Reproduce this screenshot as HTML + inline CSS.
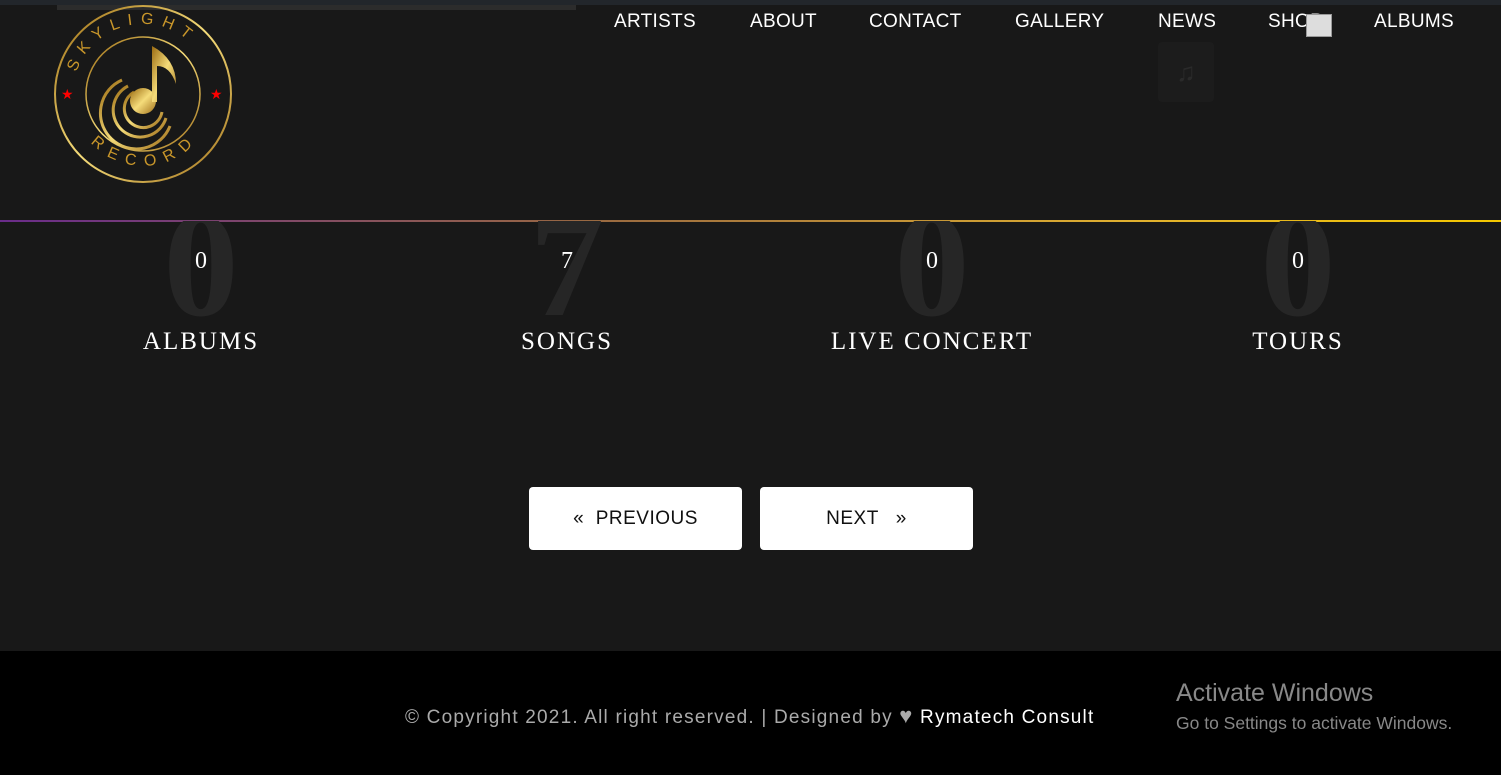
<!DOCTYPE html>
<html><head><meta charset="utf-8"><style>
*{margin:0;padding:0;box-sizing:border-box}
body{width:1501px;height:775px;background:#181818;position:relative;overflow:hidden;font-family:"Liberation Sans",sans-serif}
.topbar{position:absolute;left:0;top:0;width:1501px;height:5px;background:#22262b}
.strip{position:absolute;left:57px;top:5px;width:519px;height:5px;background:#2c2c2c}
nav a{position:absolute;top:11px;color:#fff;font-size:19px;text-decoration:none;letter-spacing:.3px}
.line{position:absolute;left:0;top:220px;width:1501px;height:2px;background:linear-gradient(90deg,#6a2c8a,#9a6a40 40%,#e0b030 75%,#f5c800)}
.stat{position:absolute;top:200px;width:360px;margin-left:-180px;text-align:center;color:#fff;font-family:"Liberation Serif",serif}
.big{position:absolute;left:0;right:0;top:-10px;font-size:150px;font-weight:bold;color:#262626;line-height:150px;clip-path:inset(31px 0 0 0)}
.num{position:absolute;left:0;right:0;top:48px;font-size:24px}
.lbl{position:absolute;left:0;right:0;top:128px;font-size:25px;letter-spacing:2px}
.btn{position:absolute;top:487px;height:63px;width:213px;background:#fff;border-radius:4px;color:#111;font-size:19px;line-height:63px;text-align:center;letter-spacing:.5px}
footer{position:absolute;left:0;top:651px;width:1501px;height:124px;background:#000}
.copy{position:absolute;left:405px;top:52px;color:#aaa;font-size:19px;letter-spacing:1.2px;white-space:nowrap}
.copy b{color:#fff;font-weight:normal}
.win1{position:absolute;left:1176px;top:28px;color:#888;font-size:25px}
.win2{position:absolute;left:1176px;top:62px;color:#888;font-size:17.5px}
</style></head><body>
<div class="topbar"></div><div class="strip"></div>
<div style="position:absolute;left:1158px;top:42px;width:56px;height:60px;background:#1c1c1c;border-radius:4px;color:#2a2a2a;font-size:26px;text-align:center;line-height:60px">♫</div>
<svg style="position:absolute;left:52px;top:4px" width="182" height="182" viewBox="0 0 182 182">
<defs><linearGradient id="g" x1="0" y1="0" x2="1" y2="1"><stop offset="0" stop-color="#9a6a10"/><stop offset=".5" stop-color="#f5dc7a"/><stop offset="1" stop-color="#a0701a"/></linearGradient></defs>
<circle cx="91" cy="90" r="88" fill="none" stroke="url(#g)" stroke-width="2"/>
<circle cx="91" cy="90" r="57" fill="none" stroke="url(#g)" stroke-width="1.5"/>
<text x="9" y="95" fill="#f00" font-size="14">★</text><text x="158" y="95" fill="#f00" font-size="14">★</text>
<path id="tp" d="M21,90 A70,70 0 0,1 161,90" fill="none"/>
<text font-size="16" fill="#c8962a" letter-spacing="8" font-family="Liberation Sans"><textPath href="#tp" startOffset="10%">SKYLIGHT</textPath></text>
<path id="bp" d="M24,112 A70,70 0 0,0 158,112" fill="none"/>
<text font-size="16" fill="#c8962a" letter-spacing="9" font-family="Liberation Sans"><textPath href="#bp" startOffset="17%">RECORD</textPath></text>
<path d="M70,76 A36,36 0 1,0 118,122" fill="none" stroke="url(#g)" stroke-width="3"/>
<path d="M76,82 A27,27 0 1,0 114,114" fill="none" stroke="url(#g)" stroke-width="3"/>
<path d="M82,88 A19,19 0 1,0 110,108" fill="none" stroke="url(#g)" stroke-width="3"/>
<circle cx="91" cy="97" r="13" fill="url(#g)"/>
<path d="M100,98 L100,42 Q124,55 124,80 Q118,62 105,62 L105,98Z" fill="url(#g)"/>
</svg>
<nav><a style="left:614px">ARTISTS</a><a style="left:750px">ABOUT</a><a style="left:869px">CONTACT</a><a style="left:1015px">GALLERY</a><a style="left:1158px">NEWS</a><a style="left:1268px">SHOP</a><a style="left:1374px">ALBUMS</a></nav>
<div style="position:absolute;left:1306px;top:14px;width:26px;height:23px;background:#ddd;border:1px solid #999"></div>
<div class="line"></div>
<div class="stat" style="left:201px"><div class="big">0</div><div class="num">0</div><div class="lbl">ALBUMS</div></div>
<div class="stat" style="left:567px"><div class="big">7</div><div class="num">7</div><div class="lbl">SONGS</div></div>
<div class="stat" style="left:932px"><div class="big">0</div><div class="num">0</div><div class="lbl">LIVE CONCERT</div></div>
<div class="stat" style="left:1298px"><div class="big">0</div><div class="num">0</div><div class="lbl">TOURS</div></div>
<div class="btn" style="left:529px">«&nbsp; PREVIOUS</div>
<div class="btn" style="left:760px">NEXT &nbsp; »</div>
<footer><div class="copy">© Copyright 2021. All right reserved. | Designed by <span style="color:#aaa;font-size:22px">♥</span> <b>Rymatech Consult</b></div>
<div class="win1">Activate Windows</div><div class="win2">Go to Settings to activate Windows.</div></footer>
</body></html>
